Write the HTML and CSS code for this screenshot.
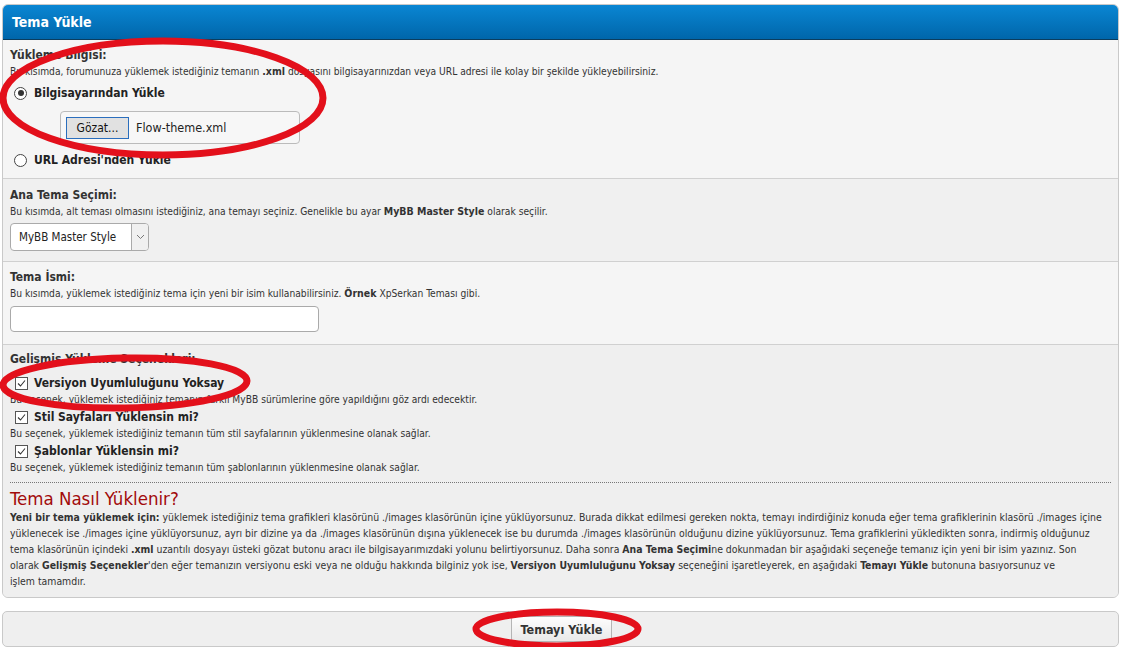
FILE: index.html
```html
<!DOCTYPE html>
<html lang="tr">
<head>
    <meta charset="UTF-8">
    <title>Tema Yükle</title>
    <link rel="stylesheet" href="styles.css">
</head>
<body>
    <div class="page">
        <div class="border_wrapper">
            <div class="thead">Tema Yükle</div>

            <div class="row row1">
                <div class="label">Yükleme Bilgisi:</div>
                <div class="desc">Bu kısımda, forumunuza yüklemek istediğiniz temanın <b>.xml</b> dosyasını bilgisayarınızdan veya URL adresi ile kolay bir şekilde yükleyebilirsiniz.</div>
                <div class="choice first">
                    <span class="radio checked"></span>
                    <span class="choice_label">Bilgisayarından Yükle</span>
                </div>
                <div class="file_box">
                    <button class="browse">Gözat...</button>
                    <span class="file_name">Flow-theme.xml</span>
                </div>
                <div class="choice last">
                    <span class="radio"></span>
                    <span class="choice_label">URL Adresi'nden Yükle</span>
                </div>
            </div>

            <div class="row row2">
                <div class="label">Ana Tema Seçimi:</div>
                <div class="desc">Bu kısımda, alt teması olmasını istediğiniz, ana temayı seçiniz. Genelikle bu ayar <b>MyBB Master Style</b> olarak seçilir.</div>
                <div class="select">
                    <span class="select_text">MyBB Master Style</span>
                    <span class="select_arrow">
                        <svg width="9" height="6" viewBox="0 0 9 6"><path d="M1 1 L4.5 4.5 L8 1" fill="none" stroke="#777" stroke-width="1"/></svg>
                    </span>
                </div>
            </div>

            <div class="row row3">
                <div class="label">Tema İsmi:</div>
                <div class="desc">Bu kısımda, yüklemek istediğiniz tema için yeni bir isim kullanabilirsiniz. <b>Örnek</b> XpSerkan Teması gibi.</div>
                <div class="text_input"></div>
            </div>

            <div class="row row4">
                <div class="label">Gelişmiş Yükleme Seçenekleri:</div>
                <div class="check_item">
                    <div class="choice">
                        <span class="checkbox"><svg width="11" height="11" viewBox="0 0 11 11"><path d="M2 5.5 L4.5 8 L9 2.5" fill="none" stroke="#333" stroke-width="1.1"/></svg></span>
                        <span class="choice_label big">Versiyon Uyumluluğunu Yoksay</span>
                    </div>
                    <div class="desc">Bu seçenek, yüklemek istediğiniz temanın farklı MyBB sürümlerine göre yapıldığını göz ardı edecektir.</div>
                </div>
                <div class="check_item">
                    <div class="choice">
                        <span class="checkbox"><svg width="11" height="11" viewBox="0 0 11 11"><path d="M2 5.5 L4.5 8 L9 2.5" fill="none" stroke="#333" stroke-width="1.1"/></svg></span>
                        <span class="choice_label big">Stil Sayfaları Yüklensin mi?</span>
                    </div>
                    <div class="desc">Bu seçenek, yüklemek istediğiniz temanın tüm stil sayfalarının yüklenmesine olanak sağlar.</div>
                </div>
                <div class="check_item">
                    <div class="choice">
                        <span class="checkbox"><svg width="11" height="11" viewBox="0 0 11 11"><path d="M2 5.5 L4.5 8 L9 2.5" fill="none" stroke="#333" stroke-width="1.1"/></svg></span>
                        <span class="choice_label big">Şablonlar Yüklensin mi?</span>
                    </div>
                    <div class="desc">Bu seçenek, yüklemek istediğiniz temanın tüm şablonlarının yüklenmesine olanak sağlar.</div>
                </div>

                <div class="help">
                    <div class="help_title">Tema Nasıl Yüklenir?</div>
                    <p class="help_text">
                        <b>Yeni bir tema yüklemek için:</b> yüklemek istediğiniz tema grafikleri klasörünü ./images klasörünün içine yüklüyorsunuz. Burada dikkat edilmesi gereken nokta, temayı indirdiğiniz konuda eğer tema grafiklerinin klasörü ./images içine<br>
                        yüklenecek ise ./images içine yüklüyorsunuz, ayrı bir dizine ya da ./images klasörünün dışına yüklenecek ise bu durumda ./images klasörünün olduğunu dizine yüklüyorsunuz. Tema grafiklerini yükledikten sonra, indirmiş olduğunuz<br>
                        tema klasörünün içindeki <b>.xml</b> uzantılı dosyayı üsteki gözat butonu aracı ile bilgisayarımızdaki yolunu belirtiyorsunuz. Daha sonra <b>Ana Tema Seçimi</b>ne dokunmadan bir aşağıdaki seçeneğe temanız için yeni bir isim yazınız. Son<br>
                        olarak <b>Gelişmiş Seçenekler</b>'den eğer temanızın versiyonu eski veya ne olduğu hakkında bilginiz yok ise, <b>Versiyon Uyumluluğunu Yoksay</b> seçeneğini işaretleyerek, en aşağıdaki <b>Temayı Yükle</b> butonuna basıyorsunuz ve<br>
                        işlem tamamdır.
                    </p>
                </div>
            </div>
        </div>

        <div class="submit_bar">
            <button class="submit_button">Temayı Yükle</button>
        </div>
    </div>

    <svg class="marks" width="1125" height="649" viewBox="0 0 1125 649">
        <ellipse cx="163" cy="98" rx="160" ry="57" fill="none" stroke="#e3101b" stroke-width="7"/>
        <ellipse cx="125" cy="383" rx="122" ry="25" fill="none" stroke="#e3101b" stroke-width="7" transform="rotate(-1 125 383)"/>
        <ellipse cx="557" cy="629" rx="81" ry="17" fill="none" stroke="#e3101b" stroke-width="7"/>
    </svg>
</body>
</html>
```

FILE: styles.css
```css
body {
    margin: 0;
    background: #fff;
    font-family: "DejaVu Sans Condensed", "DejaVu Sans", sans-serif;
    font-size: 10px;
    color: #333;
    position: relative;
}
.page {
    padding: 4px 6px 0 2px;
}
.border_wrapper {
    border: 1px solid #c9c9c9;
    border-radius: 6px;
    overflow: hidden;
    background: #efefef;
}
.thead {
    height: 34px;
    line-height: 34px;
    padding-left: 9px;
    background: linear-gradient(#0a86d3, #0066aa);
    border-bottom: 1px solid #0b3d5e;
    color: #fff;
    font-weight: bold;
    font-size: 14px;
}
.row {
    padding: 8px 7px 0 7px;
    border-bottom: 1px solid #d0d0d0;
}
.row1 {
    background: #f5f5f5;
    padding-top: 7px;
    height: 131px;
}
.row2 {
    background: #f0f0f0;
    height: 74px;
}
.row3 {
    background: #f5f5f5;
    padding-top: 7px;
    height: 75px;
}
.row4 {
    background: #efefef;
    padding-top: 6px;
    height: 246px;
    border-bottom: none;
}
.label {
    font-weight: bold;
    font-size: 12px;
    line-height: 16px;
    color: #333;
}
.desc {
    font-size: 10.2px;
    line-height: 16px;
    color: #333;
}
.desc b {
    font-size: 10.5px;
}
.choice {
    display: flex;
    align-items: center;
    gap: 7px;
    height: 18px;
}
.row1 .choice {
    padding-left: 4px;
}
.row1 .choice.first {
    margin-top: 4px;
}
.row1 .choice.last {
    margin-top: 7px;
}
.choice_label {
    font-weight: bold;
    font-size: 12px;
    color: #222;
}
.radio {
    width: 11px;
    height: 11px;
    border: 1px solid #444;
    border-radius: 50%;
    background: #fff;
    display: flex;
    align-items: center;
    justify-content: center;
}
.radio.checked::after {
    content: "";
    width: 6px;
    height: 6px;
    border-radius: 50%;
    background: #333;
}
.file_box {
    margin: 9px 0 0 50px;
    width: 240px;
    height: 33px;
    border: 1px solid #bbb;
    border-radius: 4px;
    background: #f7f7f7;
    display: flex;
    align-items: center;
    gap: 7px;
    padding-left: 5px;
    box-sizing: border-box;
}
.browse {
    height: 22px;
    width: 63px;
    border: 1px solid #2a6ebd;
    background: #e1e1e1;
    font-family: "DejaVu Sans Condensed", "DejaVu Sans", sans-serif;
    font-size: 12px;
    color: #111;
    padding: 0;
}
.file_name {
    font-size: 12.5px;
    color: #222;
}
.select {
    margin-top: 3px;
    width: 139px;
    height: 28px;
    border: 1px solid #aaa;
    border-radius: 4px;
    background: #fff;
    display: flex;
    box-sizing: border-box;
    overflow: hidden;
}
.select_text {
    flex: 1;
    line-height: 26px;
    padding-left: 8px;
    font-size: 11.5px;
    color: #222;
}
.select_arrow {
    width: 16px;
    border-left: 1px solid #aaa;
    background: #f0f0f0;
    display: flex;
    align-items: center;
    justify-content: center;
}
.text_input {
    margin-top: 4px;
    width: 309px;
    height: 26px;
    border: 1px solid #aaa;
    border-radius: 4px;
    background: #fff;
    box-sizing: border-box;
}
.row4 .label {
    margin-bottom: 7px;
}
.check_item .choice {
    padding-left: 5px;
    gap: 6px;
}
.checkbox {
    width: 11px;
    height: 11px;
    border: 1px solid #555;
    background: #fff;
    display: flex;
}
.help {
    margin-top: 6px;
    border-top: 1px dotted #777;
    padding-top: 5px;
}
.help_title {
    color: #a20b0b;
    font-size: 18.5px;
    line-height: 22px;
}
.help_text {
    margin: -1px 0 0 0;
    font-size: 10.4px;
    line-height: 16px;
    color: #333;
}
.submit_bar {
    margin-top: 13px;
    height: 34px;
    border: 1px solid #c9c9c9;
    border-radius: 5px;
    background: #efefef;
    display: flex;
    align-items: center;
    justify-content: center;
}
.submit_button {
    height: 26px;
    padding: 0 9px;
    border: 1px solid #b5b5b5;
    border-radius: 3px;
    background: linear-gradient(#fdfdfd, #e9e9e9);
    font-family: "DejaVu Sans Condensed", "DejaVu Sans", sans-serif;
    font-weight: bold;
    font-size: 12.5px;
    color: #333;
    margin-left: 2px;
}
.marks {
    position: absolute;
    top: 0;
    left: 0;
    pointer-events: none;
}
```
